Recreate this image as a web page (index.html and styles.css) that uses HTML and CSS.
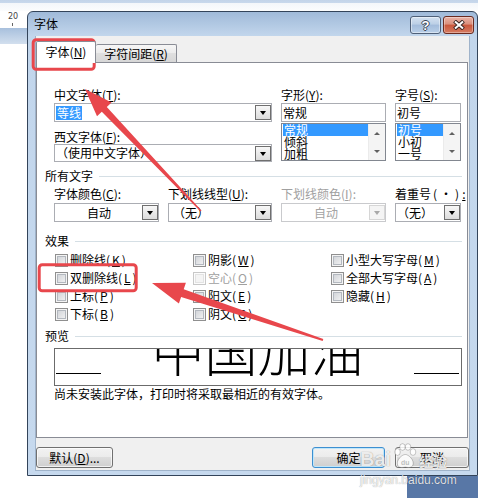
FILE: index.html
```html
<!DOCTYPE html>
<html lang="zh-CN">
<head>
    <meta charset="UTF-8">
    <title>字体</title>
    <link rel="stylesheet" href="styles.css">
</head>
<body>
    <div class="topline"></div>
    <div class="main">
        <div class="side">
            <div class="ruler"><span class="ruler-num">20</span><span class="tick"></span></div>
            <div class="ruler-band"></div>
        </div>

        <div class="dialog">
            <div class="titlebar">
                <span class="title">字体</span>
                <div class="caption-btns">
                    <div class="cap cap-help">?</div>
                    <div class="cap cap-close">
                        <svg width="12" height="10" viewBox="0 0 12 10">
                            <path d="M1.5 1 L10.5 9 M10.5 1 L1.5 9" stroke="#3b2724" stroke-width="4"/>
                            <path d="M2 1.5 L10 8.5 M10 1.5 L2 8.5" stroke="#fff" stroke-width="2"/>
                        </svg>
                    </div>
                </div>
            </div>

            <div class="client-wrap">
                <div class="client">
                    <div class="tabs">
                        <div class="tab tab-active">字体(<u>N</u>)</div>
                        <div class="tab tab-idle">字符间距(<u>R</u>)</div>
                    </div>

                    <div class="panel">
                        <div class="font-grid">
                            <div>
                                <div class="lbl">中文字体(<u>T</u>):</div>
                                <div class="combo"><span class="hl">等线</span><span class="dd"></span></div>
                                <div class="lbl lbl-gap">西文字体(<u>F</u>):</div>
                                <div class="combo combo-low"><span class="combo-text">（使用中文字体）</span><span class="dd"></span></div>
                            </div>
                            <div>
                                <div class="lbl">字形(<u>Y</u>):</div>
                                <div class="field">常规</div>
                                <div class="list">
                                    <div class="list-items">
                                        <div class="list-item is-sel">常规</div>
                                        <div class="list-item">倾斜</div>
                                        <div class="list-item">加粗</div>
                                    </div>
                                    <div class="vscroll"><span class="arr-up"></span><span class="arr-down"></span></div>
                                </div>
                            </div>
                            <div>
                                <div class="lbl">字号(<u>S</u>):</div>
                                <div class="field">初号</div>
                                <div class="list">
                                    <div class="list-items">
                                        <div class="list-item is-sel">初号</div>
                                        <div class="list-item">小初</div>
                                        <div class="list-item">一号</div>
                                    </div>
                                    <div class="vscroll"><span class="arr-up"></span><span class="arr-down"></span></div>
                                </div>
                            </div>
                        </div>

                        <div class="group-head head-all">所有文字</div>
                        <div class="attr-grid">
                            <div>
                                <div class="lbl">字体颜色(<u>C</u>):</div>
                                <div class="combo combo-attr"><span class="combo-text center">自动</span><span class="dd"></span></div>
                            </div>
                            <div>
                                <div class="lbl">下划线线型(<u>U</u>):</div>
                                <div class="combo combo-attr"><span class="combo-text pad4">（无）</span><span class="dd"></span></div>
                            </div>
                            <div>
                                <div class="lbl lbl-off">下划线颜色(<u>I</u>):</div>
                                <div class="combo combo-attr combo-off"><span class="combo-text center">自动</span><span class="dd"></span></div>
                            </div>
                            <div>
                                <div class="lbl">着重号<span class="dot">(·)</span><u>:</u></div>
                                <div class="combo combo-attr"><span class="combo-text">（无）</span><span class="dd"></span></div>
                            </div>
                        </div>

                        <div class="group-head head-fx">效果</div>
                        <div class="effects">
                            <div class="check"><span class="cb"></span>删除线(<u>K</u>)</div>
                            <div class="check"><span class="cb"></span>双删除线(<u>L</u>)</div>
                            <div class="check"><span class="cb"></span>上标(<u>P</u>)</div>
                            <div class="check"><span class="cb"></span>下标(<u>B</u>)</div>
                            <div class="check"><span class="cb"></span>阴影(<u>W</u>)</div>
                            <div class="check check-off"><span class="cb"></span>空心(<u>O</u>)</div>
                            <div class="check"><span class="cb"></span>阳文(<u>E</u>)</div>
                            <div class="check"><span class="cb"></span>阴文(<u>G</u>)</div>
                            <div class="check"><span class="cb"></span>小型大写字母(<u>M</u>)</div>
                            <div class="check"><span class="cb"></span>全部大写字母(<u>A</u>)</div>
                            <div class="check"><span class="cb"></span>隐藏(<u>H</u>)</div>
                        </div>

                        <div class="group-head head-pv">预览</div>
                        <div class="preview">
                            <span class="pv-rule"></span>
                            <span class="pv-text">中国加油</span>
                            <span class="pv-rule"></span>
                        </div>
                        <div class="note">尚未安装此字体，打印时将采取最相近的有效字体。</div>
                    </div>

                    <div class="btn-row">
                        <div class="btn btn-def">默认(<u>D</u>)...</div>
                        <div class="btn btn-ok">确定</div>
                        <div class="btn btn-cancel">取消</div>
                    </div>
                </div>
            </div>
        </div>
    </div>
    <div class="bottom"><div class="desk"></div></div>

    <!-- red annotations -->
    <svg class="marks" width="478" height="498" viewBox="0 0 478 498">
        <rect x="33.2" y="39.8" width="61" height="29.4" rx="3" fill="none" stroke="#e8474c" stroke-width="3"/>
        <rect x="39.2" y="264.8" width="97" height="26" rx="3" fill="none" stroke="#e8474c" stroke-width="3"/>
        <polygon points="85,89 111.6,102.4 106.8,106.9 201.5,210.5 200.5,211.5 101.8,111.7 97,116.2" fill="#e8474c"/>
        <polygon points="152,283 185.9,282.7 183.7,289.3 323.3,339.1 322.7,340.9 181.1,296.9 178.9,303.5" fill="#e8474c"/>
    </svg>

    <div class="watermark">
        <div class="wm-top">
            <span class="wm-bai">Bai</span>
            <svg class="wm-paw" width="24" height="26" viewBox="0 0 24 26">
                <g fill="rgba(255,255,255,0.85)" stroke="rgba(0,0,0,0.3)" stroke-width="0.7">
                    <ellipse cx="4.5" cy="9" rx="2.8" ry="3.4"/>
                    <ellipse cx="9.5" cy="4" rx="2.8" ry="3.3"/>
                    <ellipse cx="15" cy="4" rx="2.8" ry="3.3"/>
                    <ellipse cx="20" cy="9" rx="2.8" ry="3.4"/>
                    <path d="M4.5 22 C3 17 9 11.5 12.3 11.5 C15.6 11.5 21.5 17 20 22 C19 25 15 24.5 12.3 24 C9.6 24.5 5.5 25 4.5 22 Z"/>
                </g>
                <text x="12.3" y="21.5" text-anchor="middle" font-family="Liberation Sans" font-size="7" font-weight="bold" fill="rgba(0,0,0,0.2)">du</text>
            </svg>
            <span class="wm-jy">经验</span>
        </div>
        <div class="wm-url">jingyan.baidu.com</div>
    </div>
</body>
</html>
```

FILE: styles.css
```css
* {
    box-sizing: border-box;
}

body {
    margin: 0;
    width: 478px;
    height: 498px;
    overflow: hidden;
    position: relative;
    background: #fff;
    font-family: "Noto Sans CJK SC", "Noto Sans", sans-serif;
    font-size: 12px;
    line-height: 14px;
    color: #000;
}

u {
    text-decoration: underline;
    text-underline-offset: 1px;
}

/* word window behind the dialog */
.topline {
    height: 11px;
    background: linear-gradient(#c3d4e9 0, #c8d8ec 3px, #f3f6fa 3px, #fbfcfd 11px);
}

.main {
    display: flex;
    height: 465px;
}

.side {
    width: 27px;
    flex: none;
}

.ruler {
    height: 17px;
    padding: 2px 0 0 8px;
    display: flex;
    flex-direction: column;
}

.ruler-num {
    font-family: "DejaVu Sans", sans-serif;
    font-size: 8px;
    line-height: 8px;
    color: #444;
}

.tick {
    width: 1px;
    height: 3px;
    background: #666;
    margin: 2px 0 0 4px;
}

.ruler-band {
    height: 16px;
    background: linear-gradient(#a8c0dd, #d2dfee);
}

.bottom {
    height: 22px;
    display: flex;
}

.desk {
    margin-left: auto;
    width: 71px;
    background: #5877a6;
}

/* dialog frame */
.dialog {
    width: 451px;
    height: 465px;
    border: 1px solid #33445a;
    border-radius: 6px 6px 0 0;
    background: linear-gradient(#a0bad9, #c2d6ec 24px, #c6d9ee);
    display: flex;
    flex-direction: column;
}

.titlebar {
    height: 24px;
    flex: none;
    display: flex;
    align-items: flex-start;
    padding: 0 3px 0 6px;
}

.title {
    margin-top: 5px;
}

.caption-btns {
    margin-left: auto;
    margin-top: 4px;
    display: flex;
    gap: 2px;
}

.cap {
    width: 31px;
    height: 18px;
    border-radius: 3px;
    display: flex;
    align-items: center;
    justify-content: center;
}

.cap-help {
    border: 1px solid #4f6078;
    background: linear-gradient(#d4e1f0, #bccfe6 45%, #a3bcdb 50%, #b9cfe8);
    box-shadow: inset 0 0 0 1px rgba(255, 255, 255, 0.45);
    font-family: "Liberation Sans", sans-serif;
    font-weight: bold;
    font-size: 13px;
    line-height: 13px;
    color: #fff;
    text-shadow: 1px 0 #3a4656, -1px 0 #3a4656, 0 1px #3a4656, 0 -1px #3a4656;
}

.cap-close {
    border: 1px solid #6a2a1f;
    background: linear-gradient(#eab3a6, #da8f7c 45%, #c9563b 50%, #d67c62);
    box-shadow: inset 0 0 0 1px rgba(255, 255, 255, 0.35);
}

.client-wrap {
    flex: 1;
    display: flex;
    padding: 0 7px 4px 7px;
}

.client {
    flex: 1;
    background: #f0f0f0;
    border: 1px solid #9fb3ca;
    border-top: 0;
    padding: 5px 0 2px 0;
    display: flex;
    flex-direction: column;
}

/* tabs */
.tabs {
    display: flex;
    align-items: flex-end;
    height: 21px;
    flex: none;
}

.tab {
    border: 1px solid #898c95;
    border-bottom: 0;
    border-radius: 2px 2px 0 0;
    text-align: center;
    white-space: nowrap;
}

.tab-active {
    width: 60px;
    height: 22px;
    margin-bottom: -1px;
    padding-top: 3px;
    background: #fff;
    position: relative;
    z-index: 1;
}

.tab-idle {
    width: 81px;
    height: 18px;
    padding-top: 2px;
    border-left: 0;
    background: linear-gradient(#f6f6f6, #ebebeb 50%, #dfdfdf 50%, #d7d7d7);
}

.panel {
    height: 376px;
    flex: none;
    margin-right: 1px;
    border: 1px solid #898c95;
    background: #fff;
    padding: 25px 5px 0 17px;
}

/* font fields */
.font-grid {
    display: grid;
    grid-template-columns: 218px 105px 66px;
    column-gap: 9px;
}

.lbl {
    height: 14px;
    white-space: nowrap;
}

.lbl-gap {
    margin-top: 8px;
}

.lbl-off {
    color: #a0a0a0;
}

.dot {
    letter-spacing: 3px;
    padding-left: 2px;
}

.combo {
    height: 19px;
    margin-top: 1px;
    border: 1px solid #abadb3;
    background: #fff;
    display: flex;
    align-items: center;
    padding-left: 1px;
    white-space: nowrap;
}

.combo-low {
    height: 18px;
    margin-top: 0;
}

.combo-attr {
    margin-top: 2px;
}

.combo-text {
    flex: 1;
}

.combo-text.center {
    text-align: center;
}

.combo-text.pad4 {
    padding-left: 3px;
}

.hl {
    background: #3399ff;
    color: #fff;
    padding: 0 1px;
    margin-right: auto;
}

.dd {
    flex: none;
    width: 16px;
    height: 15px;
    border: 1px solid #6f6f6f;
    background: linear-gradient(#f7f7f7, #dcdcdc);
    display: flex;
    align-items: center;
    justify-content: center;
}

.dd::after {
    content: "";
    border-left: 3.5px solid transparent;
    border-right: 3.5px solid transparent;
    border-top: 4px solid #000;
    margin-top: 1px;
}

.combo-off {
    border-color: #c9cacd;
    color: #a3a3a3;
}

.combo-off .dd {
    border-color: #d6d6d6;
    background: #f4f4f4;
}

.combo-off .dd::after {
    border-top-color: #a8a8a8;
}

.field {
    height: 19px;
    margin-top: 1px;
    border: 1px solid #abadb3;
    padding-left: 1px;
    line-height: 17px;
}

.list {
    height: 38px;
    margin-top: 1px;
    border: 1px solid #828790;
    background: #fff;
    display: flex;
}

.list-items {
    flex: 1;
    padding-left: 1px;
    overflow: hidden;
}

.list-item {
    height: 12px;
    line-height: 12px;
    padding-left: 1px;
}

.list-item.is-sel {
    background: #3399ff;
    color: #fff;
}

.vscroll {
    width: 17px;
    flex: none;
    background: #f4f4f4;
    border-left: 1px solid #ebebeb;
    display: flex;
    flex-direction: column;
    justify-content: space-between;
    align-items: center;
    padding: 8px 0 7px;
}

.arr-up {
    border-left: 3px solid transparent;
    border-right: 3px solid transparent;
    border-bottom: 3px solid #606060;
}

.arr-down {
    border-left: 3px solid transparent;
    border-right: 3px solid transparent;
    border-top: 3px solid #606060;
}

/* groups */
.group-head {
    display: flex;
    align-items: center;
    height: 14px;
    margin-left: -9px;
    white-space: nowrap;
}

.group-head::after {
    content: "";
    flex: 1;
    height: 1px;
    background: #d5dfe5;
    margin-left: 6px;
}

.head-all {
    margin-top: 7px;
}

.head-fx {
    margin-top: 12px;
}

.head-pv {
    margin-top: 6px;
}

.attr-grid {
    display: grid;
    grid-template-columns: 105px 104px 105px 66px;
    column-gap: 9px;
    margin-top: 4px;
}

.effects {
    display: grid;
    grid-template-columns: 138px 138px 1fr;
    grid-template-rows: repeat(4, 18px);
    grid-auto-flow: column;
    margin: 3px 0 0 1px;
}

.check {
    display: flex;
    align-items: center;
    gap: 2px;
    white-space: nowrap;
}

.cb {
    width: 13px;
    height: 13px;
    flex: none;
    border: 1px solid #8f8f8f;
    background: linear-gradient(135deg, #cbced3, #f7f7f7);
    box-shadow: inset 0 0 0 1px #f4f4f4, inset 0 0 0 2px #b3b8bf;
}

.check-off {
    color: #a0a0a0;
}

.check-off .cb {
    border-color: #c8c8c8;
    background: #f4f4f4;
    box-shadow: inset 0 0 0 1px #fcfcfc, inset 0 0 0 2px #e3e3e3;
}

/* preview */
.preview {
    height: 38px;
    margin-top: 5px;
    border: 1px solid #6b6b6b;
    display: flex;
    justify-content: space-between;
    align-items: flex-start;
    overflow: hidden;
    padding: 0 2px 0 1px;
}

.pv-rule {
    width: 45px;
    height: 1px;
    background: #000;
    margin-top: 24px;
}

.pv-text {
    font-size: 53px;
    line-height: 53px;
    font-weight: 300;
    margin-top: -26px;
    white-space: nowrap;
}

.note {
    margin-top: 1px;
    white-space: nowrap;
}

/* buttons */
.btn-row {
    display: flex;
    height: 21px;
    margin-top: 9px;
    flex: none;
}

.btn {
    height: 21px;
    border: 1px solid #707070;
    border-radius: 3px;
    background: linear-gradient(#f2f2f2, #ebebeb 50%, #dddddd 50%, #cfcfcf);
    box-shadow: inset 0 0 0 1px rgba(255, 255, 255, 0.7);
    display: flex;
    align-items: center;
    justify-content: center;
    white-space: nowrap;
}

.btn-def {
    width: 77px;
}

.btn-ok {
    width: 73px;
    margin-left: auto;
    border-color: #3c8fd1;
    box-shadow: inset 0 0 0 1px #bfe6fa;
}

.btn-cancel {
    width: 74px;
    margin-left: 10px;
}

/* overlays */
.marks {
    position: absolute;
    left: 0;
    top: 0;
    pointer-events: none;
}

.watermark {
    position: absolute;
    left: 360px;
    top: 441px;
    color: rgba(255, 255, 255, 0.85);
    text-shadow: 0 0 1px rgba(0, 0, 0, 0.45);
    pointer-events: none;
}

.wm-top {
    display: flex;
    align-items: flex-end;
    height: 28px;
}

.wm-bai {
    font-family: "Liberation Sans", sans-serif;
    font-weight: bold;
    font-size: 20px;
    line-height: 20px;
}

.wm-paw {
    margin-left: 2px;
}

.wm-jy {
    font-size: 14px;
    line-height: 16px;
    font-weight: bold;
    margin-left: 2px;
}

.wm-url {
    font-family: "Liberation Sans", sans-serif;
    font-size: 12px;
    line-height: 12px;
    margin-top: 5px;
}
```
